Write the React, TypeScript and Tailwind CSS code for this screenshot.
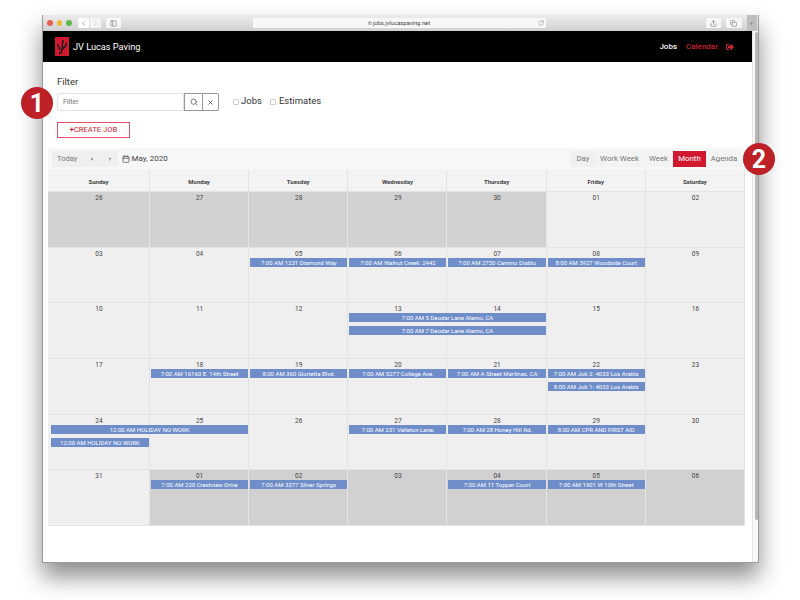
import { Search, X, Share, Copy, ChevronLeft, ChevronRight, RotateCw, PanelLeft, Calendar, Lock, Plus } from "lucide-react";
import { FaSignOutAlt } from "react-icons/fa";

type Ev = { label: string; cls: string };
type Week = { days: string[]; off: number[]; rows: Ev[][] };

const weeks: Week[] = [
  { days: ["26", "27", "28", "29", "30", "01", "02"], off: [0, 1, 2, 3, 4], rows: [] },
  {
    days: ["03", "04", "05", "06", "07", "08", "09"],
    off: [],
    rows: [[
      { label: "7:00 AM 1231 Diamond Way", cls: "col-start-3 col-span-1" },
      { label: "7:00 AM Walnut Creek: 2442", cls: "col-start-4 col-span-1" },
      { label: "7:00 AM 2750 Camino Diablo", cls: "col-start-5 col-span-1" },
      { label: "8:00 AM 3927 Woodside Court", cls: "col-start-6 col-span-1" },
    ]],
  },
  {
    days: ["10", "11", "12", "13", "14", "15", "16"],
    off: [],
    rows: [
      [{ label: "7:00 AM 5 Deodar Lane Alamo, CA", cls: "col-start-4 col-span-2" }],
      [{ label: "7:00 AM 7 Deodar Lane Alamo, CA", cls: "col-start-4 col-span-2" }],
    ],
  },
  {
    days: ["17", "18", "19", "20", "21", "22", "23"],
    off: [],
    rows: [
      [
        { label: "7:00 AM 16160 E. 14th Street", cls: "col-start-2 col-span-1" },
        { label: "8:00 AM 360 Glorietta Blvd.", cls: "col-start-3 col-span-1" },
        { label: "7:00 AM 5277 College Ave.", cls: "col-start-4 col-span-1" },
        { label: "7:00 AM A Street Martinez, CA", cls: "col-start-5 col-span-1" },
        { label: "7:00 AM Job 2: 4033 Los Arabis", cls: "col-start-6 col-span-1" },
      ],
      [{ label: "8:00 AM Job 1: 4033 Los Arabis", cls: "col-start-6 col-span-1" }],
    ],
  },
  {
    days: ["24", "25", "26", "27", "28", "29", "30"],
    off: [],
    rows: [
      [
        { label: "12:00 AM HOLIDAY NO WORK", cls: "col-start-1 col-span-2 ml-[3px]" },
        { label: "7:00 AM 231 Valleton Lane,", cls: "col-start-4 col-span-1" },
        { label: "7:00 AM 28 Honey Hill Rd,", cls: "col-start-5 col-span-1" },
        { label: "8:00 AM CPR AND FIRST AID", cls: "col-start-6 col-span-1" },
      ],
      [{ label: "12:00 AM HOLIDAY NO WORK", cls: "col-start-1 col-span-1 ml-[3px]" }],
    ],
  },
  {
    days: ["31", "01", "02", "03", "04", "05", "06"],
    off: [1, 2, 3, 4, 5, 6],
    rows: [[
      { label: "7:00 AM 220 Crestview Drive", cls: "col-start-2 col-span-1" },
      { label: "7:00 AM 3377 Silver Springs", cls: "col-start-3 col-span-1" },
      { label: "7:00 AM 11 Topper Court", cls: "col-start-5 col-span-1" },
      { label: "7:00 AM 1901 W 10th Street", cls: "col-start-6 col-span-1" },
    ]],
  },
];

const dayNames = ["Sunday", "Monday", "Tuesday", "Wednesday", "Thursday", "Friday", "Saturday"];
const cols = "grid grid-cols-[102px_repeat(6,1fr)]";

function Logo() {
  return (
    <svg width="14" height="19" viewBox="0 0 14 19" className="shrink-0">
      <rect width="14" height="19" fill="#d2182f" />
      <path d="M2.5 7 L5 13 M8 3 L6.5 15.5 Q6 17 4 16 M11.5 6 Q10.5 11 6 12.5" stroke="#1a1a1a" strokeWidth="1.5" fill="none" />
    </svg>
  );
}

function WeekRow({ week }: { week: Week }) {
  return (
    <div className="relative flex-1">
      <div className={`${cols} absolute inset-0`}>
        {week.days.map((d, i) => (
          <div
            key={i}
            className={`border-b border-r border-[#e3e3e3] ${week.off.includes(i) ? "bg-[#d1d1d1]" : "bg-[#efefef]"}`}
          />
        ))}
      </div>
      <div className="relative">
        <div className={cols}>
          {week.days.map((d, i) => (
            <div key={i} className="h-[10px] pt-[2px] text-center text-[6.5px] leading-[8px] text-[#444]">
              {d}
            </div>
          ))}
        </div>
        {week.rows.map((row, r) => (
          <div key={r} className={`${cols} mb-[4px]`}>
            {row.map((e, k) => (
              <div
                key={k}
                className={`mx-[1px] ${e.cls} h-[9px] overflow-hidden whitespace-nowrap bg-[#6e8dc9] text-center text-[6px] font-normal leading-[9px] text-white`}
              >
                {e.label}
              </div>
            ))}
          </div>
        ))}
      </div>
    </div>
  );
}

export default function App() {
  return (
    <div className="relative h-[600px] w-[800px] overflow-hidden bg-white pl-[42px] pt-[15px] font-['Roboto',sans-serif]">
      <div className="flex h-[548px] w-[717px] flex-col border-x border-b border-[#9a9a9a] bg-white shadow-[0_14px_22px_rgba(0,0,0,0.45)]">
        {/* Browser title bar */}
        <div className="flex h-[16px] shrink-0 items-center bg-gradient-to-b from-[#ececec] to-[#d0d0d0] text-[#777]">
          <div className="ml-[4px] flex gap-[4px]">
            <span className="h-[5.5px] w-[5.5px] rounded-full bg-[#e8604c]" />
            <span className="h-[5.5px] w-[5.5px] rounded-full bg-[#f0b73a]" />
            <span className="h-[5.5px] w-[5.5px] rounded-full bg-[#5cbb4c]" />
          </div>
          <div className="ml-[6px] flex gap-[1px]">
            <span className="flex h-[10px] w-[11px] items-center justify-center rounded-[1px] bg-white">
              <ChevronLeft size={7} />
            </span>
            <span className="flex h-[10px] w-[11px] items-center justify-center rounded-[1px] bg-[#f4f4f4] text-[#bbb]">
              <ChevronRight size={7} />
            </span>
          </div>
          <span className="ml-[5px] flex h-[10px] w-[15px] items-center justify-center rounded-[1px] bg-[#f6f6f6]">
            <PanelLeft size={7} />
          </span>
          <div className="relative ml-[132px] flex h-[10px] w-[293px] items-center justify-center rounded-[1px] bg-[#f7f7f7] text-[5.8px] text-[#444]">
            <Lock size={4} className="mr-[1px]" />
            jobs.jvlucaspaving.net
            <RotateCw size={6} className="absolute right-[2px] text-[#888]" />
          </div>
          <span className="ml-[160px] flex h-[10px] w-[15px] items-center justify-center rounded-[1px] bg-[#f6f6f6]">
            <Share size={7} />
          </span>
          <span className="ml-[5px] flex h-[10px] w-[16px] items-center justify-center rounded-[1px] bg-[#f6f6f6]">
            <Copy size={7} />
          </span>
          <span className="ml-[5px] flex h-full w-[10px] items-center justify-center bg-[#bdbdbd]">
            <Plus size={5} />
          </span>
        </div>

        <div className="flex min-h-0 flex-1">
          <div className="flex w-[709px] flex-col">
            {/* App header */}
            <div className="flex h-[31px] shrink-0 items-center bg-black pl-[12px] pr-[18px]">
              <Logo />
              <span className="ml-[4px] text-[9.2px] font-normal text-white">JV Lucas Paving</span>
              <span className="ml-auto text-[8px] font-medium text-white">Jobs</span>
              <span className="ml-[9px] text-[8px] font-medium text-[#c8202f]">Calendar</span>
              <FaSignOutAlt className="ml-[8px] text-[#d32433]" size={8} />
            </div>

            {/* Filter */}
            <div className="pl-[14px] pt-[14px]">
              <div className="text-[9.5px] leading-[12px] text-[#333]">Filter</div>
              <div className="mt-[5px] flex h-[18px] items-center">
                <div className="flex h-[18px] w-[127px] items-center rounded-l-[2px] border border-[#e2e2e2] pl-[5px] text-[7px] text-[#777]">
                  Filter
                </div>
                <span className="flex h-[18px] w-[19px] items-center justify-center border border-[#999] text-[#666]">
                  <Search size={8} strokeWidth={2.5} />
                </span>
                <span className="flex h-[18px] w-[16px] items-center justify-center rounded-r-[2px] border border-l-0 border-[#999] text-[#666]">
                  <X size={7} strokeWidth={3} />
                </span>
                <span className="ml-[14px] h-[6px] w-[6px] rounded-[1px] border border-[#ccc]" />
                <span className="ml-[2px] -mt-[2px] text-[9.5px] text-[#333]">Jobs</span>
                <span className="ml-[8px] h-[6px] w-[6px] rounded-[1px] border border-[#ccc]" />
                <span className="ml-[3px] -mt-[2px] text-[9.5px] text-[#333]">Estimates</span>
              </div>
              <div className="mt-[11px] flex h-[16px] w-[73px] items-center justify-center border border-[#e4536a] text-[7.6px] font-normal text-[#d2182f]">
                <span className="font-bold">+</span>CREATE JOB
              </div>
            </div>

            {/* Calendar */}
            <div className="ml-[5px] mt-[10px] w-[697px]">
              <div className="flex h-[22px] items-center bg-[#f7f7f7] pl-[4px] pr-[3px]">
                <div className="flex h-[16px] items-center bg-[#efefef] text-[7.6px] text-[#777]">
                  <span className="px-[5px]">Today</span>
                  <span className="flex w-[20px] items-center justify-center text-[#555]">
                    <ChevronLeft size={4} strokeWidth={6} />
                  </span>
                  <span className="flex w-[16px] items-center justify-center text-[#555]">
                    <ChevronRight size={4} strokeWidth={6} />
                  </span>
                </div>
                <Calendar size={8} className="ml-[4px] text-[#444]" />
                <span className="ml-[1px] text-[8px] text-[#444]">May, 2020</span>
                <div className="ml-auto flex h-[16px] items-center text-[7.8px] text-[#777]">
                  <span className="flex h-full w-[24px] items-center justify-center bg-[#efefef]">Day</span>
                  <span className="flex h-full w-[49px] items-center justify-center bg-[#f3f3f3]">Work Week</span>
                  <span className="flex h-full w-[29px] items-center justify-center bg-[#f3f3f3]">Week</span>
                  <span className="flex h-full w-[33px] items-center justify-center bg-[#d2182f] text-white">Month</span>
                  <span className="flex h-full w-[36px] items-center justify-center bg-[#f3f3f3]">Agenda</span>
                </div>
              </div>
              <div className={`${cols} h-[22px] bg-[#f3f3f3]`}>
                {dayNames.map((n) => (
                  <div
                    key={n}
                    className="flex items-center justify-center border-b border-r border-[#e3e3e3] pt-[1px] text-[6px] font-bold text-[#444]"
                  >
                    {n}
                  </div>
                ))}
              </div>
              <div className="flex h-[334px] flex-col">
                {weeks.map((w, i) => (
                  <WeekRow key={i} week={w} />
                ))}
              </div>
            </div>
          </div>

          {/* Scrollbar */}
          <div className="flex-1 border-l border-[#e6e6e6] bg-[#f8f8f8] pl-[2px] pt-[1px]">
            <div className="h-[488px] w-[3px] rounded-full bg-[#b8b8b8]" />
          </div>
        </div>
      </div>

      {/* Annotation badges */}
      <span className="absolute left-[21px] top-[87px] flex h-[32px] w-[32px] items-center justify-center rounded-full bg-[#bd2026] text-[25px] font-bold leading-none text-white">
        1
      </span>
      <span className="absolute left-[743px] top-[143px] flex h-[32px] w-[32px] items-center justify-center rounded-full bg-[#bd2026] text-[25px] font-bold leading-none text-white">
        2
      </span>
    </div>
  );
}
